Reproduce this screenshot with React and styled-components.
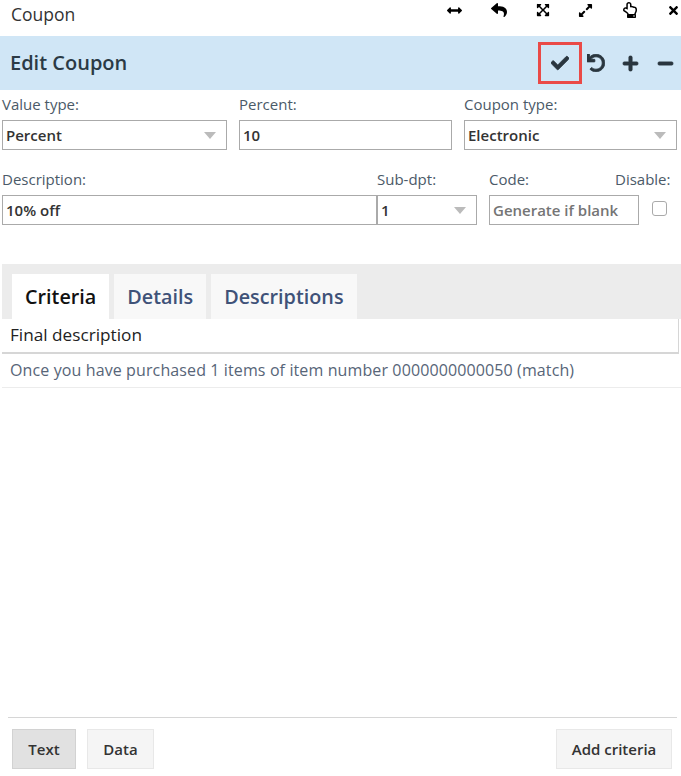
import React from 'react';
import styled, { createGlobalStyle } from 'styled-components';
import { FaArrowsAltH, FaReply, FaExpandArrowsAlt, FaExpandAlt, FaRegHandPointUp, FaTimes, FaCheck, FaUndo, FaPlus, FaMinus } from 'react-icons/fa';

const Global = createGlobalStyle`
  html, body { margin: 0; padding: 0; background: #fff; }
  body { font-family: "Open Sans", "Liberation Sans", sans-serif; }
  * { box-sizing: border-box; }
`;
const Page = styled.div`width: 681px; height: 776px; display: flex; flex-direction: column; overflow: hidden; background: #fff;`;
const TitleBar = styled.div`height: 36px; display: flex; align-items: center; justify-content: space-between; padding: 0 1px 0 11px;`;
const Title = styled.div`font-size: 17.5px; color: #333; margin-bottom: 8px;`;
const WindowTools = styled.div`display: flex; width: 233px; justify-content: space-between; align-items: center; color: #000; margin-bottom: 16px; svg { display: block; }`;
const Header = styled.div`height: 54px; background: #d0e6f6; display: flex; align-items: center; justify-content: space-between; padding: 0 7px 0 10px;`;
const HeaderTitle = styled.div`font-size: 20px; font-weight: 600; color: #2b3a45; margin-top: -2px;`;
const HeaderTools = styled.div`display: flex; align-items: center; color: #2a363f; svg { stroke: currentColor; stroke-width: 24px; }`;
const SaveBox = styled.div`width: 44px; height: 42px; border: 3px solid #ea4a47; display: flex; align-items: center; justify-content: center; font-size: 18px;`;
const HeaderIcon = styled.div`width: 18px; display: flex; justify-content: center; font-size: ${p => p.$size || 18}px; margin-left: ${p => p.$ml}px;`;
const Form = styled.div`height: 174px; padding: 4px 4px 0 2px;`;
const TopRow = styled.div`display: grid; grid-template-columns: 225px 213px 213px; column-gap: 12px;`;
const BottomRow = styled.div`display: grid; grid-template-columns: 375px 100px 162px 1fr; margin-top: 19px;`;
const Field = styled.div`display: flex; flex-direction: column; margin-left: ${p => p.$ml || 0}px;`;
const Label = styled.label`font-size: 15px; line-height: 20px; height: 26px; color: #4b5a68; white-space: nowrap;`;
const DisableLabel = styled(Label)`margin-left: -24px;`;
const Input = styled.div`height: 30px; border: 1px solid #aaa; background: #fff; display: flex; align-items: center; justify-content: space-between; padding: 0 ${p => p.$pr || 3}px 0 3px; font-size: 15px; font-weight: 600; color: ${p => p.$muted ? '#757575' : '#333'};`;
const Caret = styled.span`width: 0; height: 0; border-left: 6px solid transparent; border-right: 6px solid transparent; border-top: 7px solid #bbb;`;
const Check = styled.div`width: 15px; height: 15px; border: 1px solid #aaa; border-radius: 3px; background: #fff; margin: 6px 0 0 13px;`;
const Tabs = styled.div`height: 55px; margin-left: 2px; background: #ececec; padding: 10px 0 0 10px; display: flex; gap: 5px;`;
const Tab = styled.div`height: 45px; padding: 0 13px; display: flex; align-items: center; font-size: 19.8px; font-weight: 600; background: ${p => p.$active ? '#fff' : '#f8f8f8'}; color: ${p => p.$active ? '#111' : '#3f5278'};`;
const TableArea = styled.div`flex: 1; margin-left: 2px; display: flex; flex-direction: column;`;
const ColumnHead = styled.div`height: 35px; border-bottom: 2px solid #d6d6d6; border-right: 1px solid #d6d6d6; margin-right: 2px; padding-left: 8px; font-size: 17.2px; line-height: 32px; color: #222;`;
const Row = styled.div`height: 34px; border-bottom: 1px solid #ececec; padding-left: 8px; font-size: 16px; letter-spacing: .115px; line-height: 33px; color: #576578;`;
const Footer = styled.div`height: 59px; margin: 0 4px 0 8px; border-top: 1px solid #d6d6d6; padding: 11px 5px 0 4px; display: flex; gap: 11px;`;
const Button = styled.div`height: 40px; width: ${p => p.$w}px; display: flex; align-items: center; justify-content: center; font-size: 15px; font-weight: 600; color: #333; background: ${p => p.$active ? '#e1e1e1' : '#f5f5f5'}; border: 1px solid ${p => p.$active ? '#d2d2d2' : '#e8e8e8'}; margin-left: ${p => p.$push ? 'auto' : 0};`;

export default function App() {
  return (
    <Page>
      <Global />
      <TitleBar>
        <Title>Coupon</Title>
        <WindowTools>
          <FaArrowsAltH size={15} />
          <FaReply size={16} />
          <FaExpandArrowsAlt size={14} />
          <FaExpandAlt size={15} />
          <FaRegHandPointUp size={16} />
          <FaTimes size={13} />
        </WindowTools>
      </TitleBar>
      <Header>
        <HeaderTitle>Edit Coupon</HeaderTitle>
        <HeaderTools>
          <SaveBox><FaCheck /></SaveBox>
          <HeaderIcon $ml={5}><FaUndo /></HeaderIcon>
          <HeaderIcon $ml={16} $size={17}><FaPlus /></HeaderIcon>
          <HeaderIcon $ml={17} $size={17}><FaMinus /></HeaderIcon>
        </HeaderTools>
      </Header>
      <Form>
        <TopRow>
          <Field><Label>Value type:</Label><Input $pr={10}>Percent<Caret /></Input></Field>
          <Field><Label>Percent:</Label><Input>10</Input></Field>
          <Field><Label>Coupon type:</Label><Input $pr={10}>Electronic<Caret /></Input></Field>
        </TopRow>
        <BottomRow>
          <Field><Label>Description:</Label><Input>10% off</Input></Field>
          <Field><Label>Sub-dpt:</Label><Input $pr={10}>1<Caret /></Input></Field>
          <Field $ml={12}><Label>Code:</Label><Input $muted>Generate if blank</Input></Field>
          <Field><DisableLabel>Disable:</DisableLabel><Check /></Field>
        </BottomRow>
      </Form>
      <Tabs>
        <Tab $active>Criteria</Tab>
        <Tab>Details</Tab>
        <Tab>Descriptions</Tab>
      </Tabs>
      <TableArea>
        <ColumnHead>Final description</ColumnHead>
        <Row>Once you have purchased 1 items of item number 0000000000050 (match)</Row>
      </TableArea>
      <Footer>
        <Button $active $w={64}>Text</Button>
        <Button $w={67}>Data</Button>
        <Button $push $w={116}>Add criteria</Button>
      </Footer>
    </Page>
  );
}
